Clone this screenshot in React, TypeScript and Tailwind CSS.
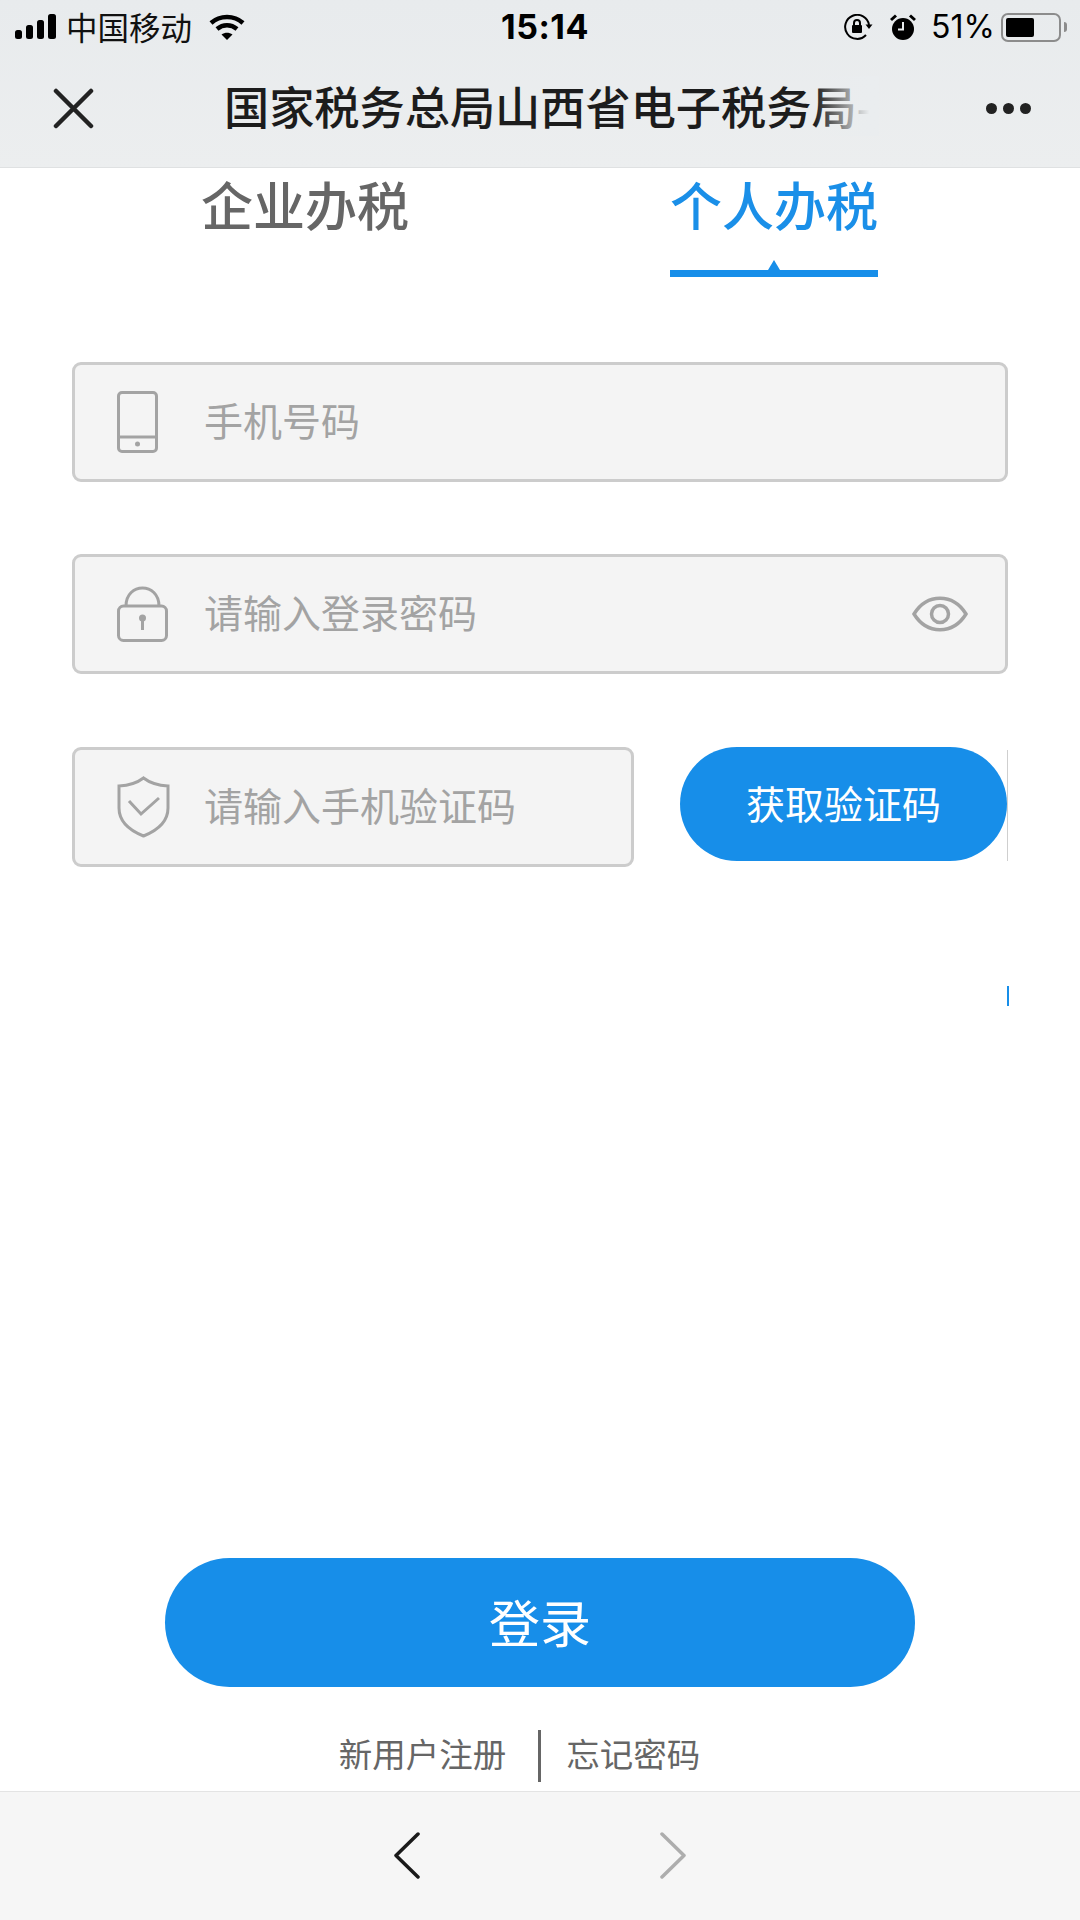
const cjk = "font-['Noto_Sans_CJK_SC','Noto_Sans',sans-serif]";

function StatusBar() {
  return (
    <div className="grid h-[52px] grid-cols-[1fr_auto_1fr] items-center pl-[15px] pr-[13px] pt-[2px] text-black">
      <div className="flex items-center">
        <svg width="42" height="26" viewBox="0 0 42 26" fill="#000">
          <rect x="0" y="16" width="7" height="9" rx="2.5" />
          <rect x="11" y="11" width="7" height="14" rx="2.5" />
          <rect x="22" y="6" width="7" height="19" rx="2.5" />
          <rect x="33" y="0" width="8" height="25" rx="2.5" />
        </svg>
        <span className={`${cjk} mb-[3px] ml-[9px] text-[31.5px] leading-[40px] text-[#111]`}>中国移动</span>
        <svg className="ml-[17px]" width="36" height="27" viewBox="0 0 36 27" fill="none" stroke="#000" strokeWidth="4.5">
          <path d="M2 9 C11 1 25 1 34 9" />
          <path d="M8 15 C14 10 22 10 28 15" />
          <path d="M18 26 L12.5 20.5 C16 18 20 18 23.5 20.5 Z" fill="#000" stroke="none" />
        </svg>
      </div>
      <span className="ml-[8px] font-['Inter',sans-serif] text-[34px] font-bold leading-[40px] tracking-[0.5px]">15:14</span>
      <div className="flex items-center justify-end">
        <svg width="29" height="27" viewBox="0 0 29 27" fill="none" stroke="#000" strokeWidth="2">
          <path d="M22 21 A12 12 0 1 1 25 11" />
          <path d="M21.5 10.5 L28.5 10.5 L25 15 Z" fill="#000" stroke="none" />
          <rect x="8" y="11" width="10" height="8" rx="1" fill="#000" stroke="none" />
          <path d="M10 11 V9 A3 3 0 0 1 16 9 V11" />
        </svg>
        <svg className="ml-[17px]" width="26" height="27" viewBox="0 0 26 27">
          <circle cx="13" cy="15" r="11" fill="#000" />
          <path d="M13 8 V15.5 H8" fill="none" stroke="#e9ecee" strokeWidth="2" />
          <path d="M1 6 L6 1.5 M25 6 L20 1.5" stroke="#000" strokeWidth="3" />
        </svg>
        <span className="ml-[15px] font-['Inter',sans-serif] text-[32px] leading-[40px]">51%</span>
        <div className="ml-[6px] flex h-[29px] w-[60px] items-center rounded-[7px] border-[2px] border-[#8c8c8c] p-[3px]">
          <div className="h-full w-[28px] rounded-[2px] bg-black" />
        </div>
        <div className="ml-[3px] h-[10px] w-[3px] rounded-r-full bg-[#8c8c8c]" />
      </div>
    </div>
  );
}

function NavBar() {
  return (
    <div className="flex h-[115px] items-center pb-[2px]">
      <svg className="ml-[53px] shrink-0" width="41" height="41" viewBox="0 0 41 41" fill="none" stroke="#222" strokeWidth="4.5" strokeLinecap="round">
        <path d="M3 3 L38 38 M38 3 L3 38" />
      </svg>
      <div className="relative mb-[6px] ml-[130px] w-[655px] shrink-0">
        <div className={`${cjk} whitespace-nowrap text-[45.2px] font-medium leading-[60px] text-[#1c1c1c]`}>国家税务总局山西省电子税务局-</div>
        <div className="absolute bottom-0 right-0 top-0 w-[65px] bg-gradient-to-r from-[#eaedef00] via-[#eaedef] via-85% to-[#eaedef]" />
      </div>
      <div className="ml-[107px] flex shrink-0 gap-[6px]">
        <div className="h-[11px] w-[11px] rounded-full bg-[#222]" />
        <div className="h-[11px] w-[11px] rounded-full bg-[#222]" />
        <div className="h-[11px] w-[11px] rounded-full bg-[#222]" />
      </div>
    </div>
  );
}

function Tabs() {
  return (
    <div className={`${cjk} flex h-[109px] gap-[261px] pl-[201px] text-[52px] font-medium leading-[62px]`}>
      <div className="pt-[5px] text-[#666666]">企业办税</div>
      <div className="relative w-[208px] pt-[5px] text-[#1a8fe8]">
        个人办税
        <div className="absolute bottom-0 left-0 h-[7px] w-[208px] bg-[#178ee9]" />
        <div className="absolute bottom-[7px] left-[98px] h-0 w-0 border-x-[6px] border-b-[10px] border-x-transparent border-b-[#178ee9]" />
      </div>
    </div>
  );
}

function Field({ icon, text, trailing, width }: { icon: React.ReactNode; text: string; trailing?: React.ReactNode; width: string }) {
  return (
    <div className={`${width} flex h-[120px] items-center rounded-[9px] border-[3px] border-[#cccccc] bg-[#f4f4f4]`}>
      <div className="ml-[42px] flex w-[87px] items-center">{icon}</div>
      <span className={`${cjk} flex-1 pb-[6px] text-[39px] leading-[50px] text-[#a3a3a3]`}>{text}</span>
      {trailing}
    </div>
  );
}

const PhoneIcon = (
  <svg width="41" height="62" viewBox="0 0 41 62" fill="none" stroke="#a3a3a3" strokeWidth="3">
    <rect x="1.5" y="1.5" width="38" height="59" rx="3.5" />
    <path d="M1.5 46 H39.5" />
    <circle cx="20.5" cy="53" r="2.5" fill="#a3a3a3" stroke="none" />
  </svg>
);

const LockIcon = (
  <svg width="51" height="56" viewBox="0 0 51 56" fill="none" stroke="#a3a3a3" strokeWidth="3">
    <rect x="1.5" y="20" width="48" height="34.5" rx="5" />
    <path d="M9 20 C9 -4 42 -4 42 20" />
    <circle cx="25.5" cy="32" r="3.5" fill="#a3a3a3" stroke="none" />
    <path d="M25.5 33 V44" />
  </svg>
);

const ShieldIcon = (
  <svg width="53" height="62" viewBox="0 0 53 62" fill="none" stroke="#a3a3a3" strokeWidth="3">
    <path d="M26.5 2 C20 7 11 9.5 2 10 V32 C2 46 14 55 26.5 60 C39 55 51 46 51 32 V10 C42 9.5 33 7 26.5 2 Z" />
    <path d="M12 25 L24 38 L42 22" strokeWidth="3" />
  </svg>
);

const EyeIcon = (
  <svg className="mr-[37px]" width="56" height="38" viewBox="0 0 56 38" fill="none" stroke="#a3a3a3" strokeWidth="3.5">
    <path d="M2 19 C15 -2 41 -2 54 19 C41 40 15 40 2 19 Z" />
    <circle cx="28" cy="19" r="8.5" />
  </svg>
);

export default function App() {
  return (
    <div className="flex h-[1920px] w-[1080px] flex-col overflow-hidden bg-white">
      <header className="h-[168px] border-b border-[#dfe1e2] bg-gradient-to-b from-[#e8ebed] to-[#eceeef]">
        <StatusBar />
        <NavBar />
      </header>
      <Tabs />
      <main className="mt-[85px] flex flex-col pl-[72px]">
        <Field icon={PhoneIcon} text="手机号码" width="w-[936px]" />
        <div className="mt-[72px]">
          <Field icon={LockIcon} text="请输入登录密码" trailing={EyeIcon} width="w-[936px]" />
        </div>
        <div className="mt-[73px] flex items-start">
          <Field icon={ShieldIcon} text="请输入手机验证码" width="w-[562px]" />
          <button className={`${cjk} ml-[46px] h-[114px] w-[327px] rounded-full bg-[#178ee9] pb-[4px] text-[39px] text-white`}>获取验证码</button>
          <div className="mt-[3px] h-[111px] w-px bg-[#cfcfcf]" />
        </div>
        <div className="ml-[935px] mt-[119px] h-[20px] w-[2px] bg-[#178ee9]" />
      </main>
      <div className="mt-auto flex flex-col items-center">
        <button className={`${cjk} h-[129px] w-[750px] rounded-full bg-[#178ee9] pb-[3px] text-[51px] text-white`}>登录</button>
        <div className={`${cjk} mt-[43px] flex h-[52px] items-center pr-[41px] text-[33.5px] leading-[48px] text-[#666666]`}>
          <span className="mb-[7px]">新用户注册</span>
          <div className="ml-[32px] mr-[25px] h-[52px] w-[3px] bg-[#666666]" />
          <span className="mb-[7px]">忘记密码</span>
        </div>
      </div>
      <footer className="mt-[9px] flex h-[129px] items-center justify-center gap-[240px] border-t border-[#e4e4e4] bg-[#f6f6f6] pb-[2px]">
        <svg width="27" height="47" viewBox="0 0 27 47" fill="none" stroke="#1a1a1a" strokeWidth="3.5" strokeLinecap="round" strokeLinejoin="round">
          <path d="M25 2 L3 23.5 L25 45" />
        </svg>
        <svg width="27" height="47" viewBox="0 0 27 47" fill="none" stroke="#adadad" strokeWidth="3.5" strokeLinecap="round" strokeLinejoin="round">
          <path d="M2 2 L24 23.5 L2 45" />
        </svg>
      </footer>
    </div>
  );
}
